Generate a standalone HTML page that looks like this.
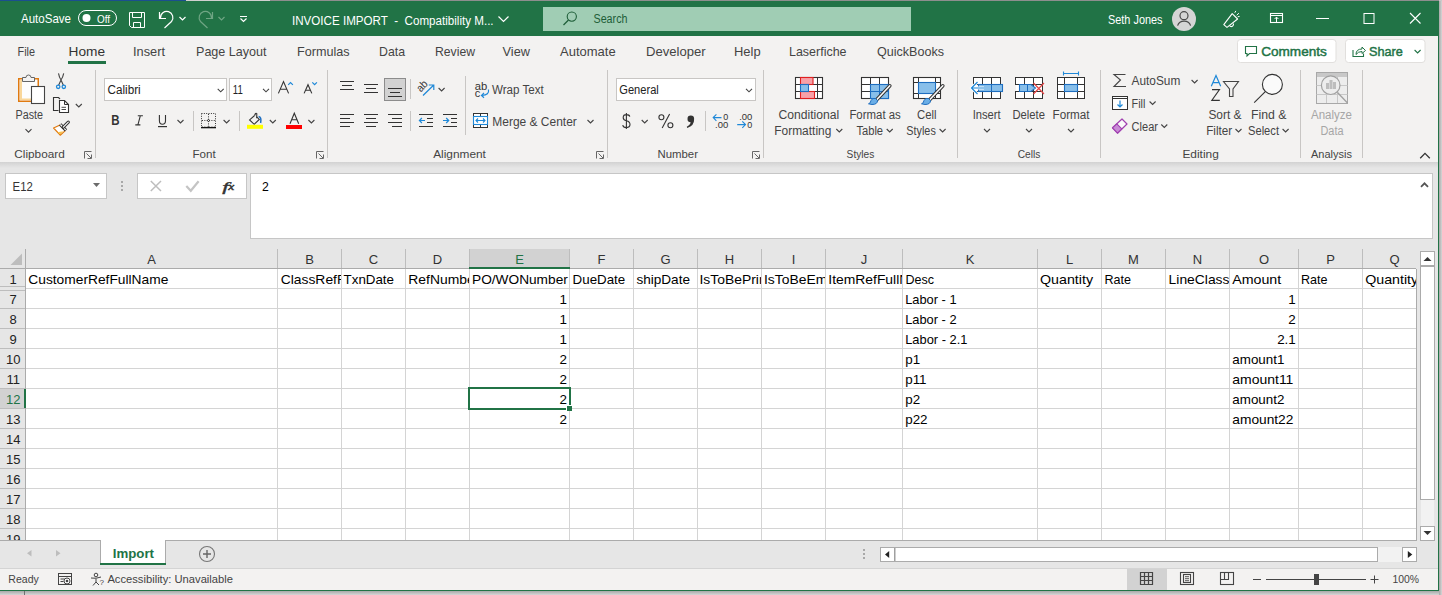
<!DOCTYPE html><html><head><meta charset="utf-8"><title>Excel</title><style>html,body{margin:0;padding:0;width:1442px;height:595px;overflow:hidden;background:#C9C9C9;font-family:"Liberation Sans",sans-serif}</style></head><body><svg width="1442" height="595" viewBox="0 0 1442 595" font-family="Liberation Sans, sans-serif" style="display:block"><rect x="0" y="0" width="1442" height="595" fill="#C9C9C9" />
<rect x="0" y="0" width="186" height="1" fill="#1B4F8F" />
<rect x="186" y="0" width="84" height="1" fill="#D0D0D0" />
<rect x="270" y="0" width="1169" height="1" fill="#8E8E8E" />
<rect x="0" y="1" width="1438" height="35" fill="#217346" />
<rect x="0" y="36" width="1438" height="126" fill="#F3F2F1" />
<rect x="0" y="162" width="1438" height="378" fill="#E6E6E6" />
<defs><linearGradient id="sh" x1="0" y1="0" x2="0" y2="1"><stop offset="0" stop-color="#D2D2D2"/><stop offset="1" stop-color="#E6E6E6"/></linearGradient></defs>
<rect x="0" y="162" width="1438" height="6" fill="url(#sh)" />
<text x="21" y="23" font-size="12.6" fill="#FFFFFF" textLength="50" lengthAdjust="spacingAndGlyphs" >AutoSave</text>
<rect x="78.5" y="10.5" width="38" height="15" rx="7.5" fill="none" stroke="#FFFFFF" stroke-width="1"/>
<circle cx="86.5" cy="18" r="4" fill="#FFFFFF"/>
<text x="97" y="22.5" font-size="11" fill="#FFFFFF" textLength="13" lengthAdjust="spacingAndGlyphs" >Off</text>
<path d="M129.5 12.5 H144.5 V27.5 H131.5 L129.5 25.5 Z" stroke="#FFFFFF" fill="none" stroke-width="1" />
<path d="M132.5 12.5 V17.5 H141.5 V12.5" stroke="#FFFFFF" fill="none" stroke-width="1" />
<path d="M133.5 27.5 V22.5 H140.5 V27.5" stroke="#FFFFFF" fill="none" stroke-width="1" />
<path d="M159.5 12 V18.5 H166" stroke="#FFFFFF" fill="none" stroke-width="1.2" />
<path d="M160.5 18 A6.2 6.2 0 1 1 171.5 21.5 L164.5 28" stroke="#FFFFFF" fill="none" stroke-width="1.2" />
<path d="M179.5 17 L182.5 20 L185.5 17" stroke="#FFFFFF" fill="none" stroke-width="1.2" />
<path d="M212.5 12 V18.5 H206" stroke="#6FA584" fill="none" stroke-width="1.2" />
<path d="M211.5 18 A6.2 6.2 0 1 0 200.5 21.5 L207.5 28" stroke="#6FA584" fill="none" stroke-width="1.2" />
<path d="M218.5 17 L221.5 20 L224.5 17" stroke="#6FA584" fill="none" stroke-width="1.2" />
<rect x="240" y="16" width="7" height="1" fill="#FFFFFF" />
<path d="M240.5 18.5 L243.5 21.5 L246.5 18.5" stroke="#FFFFFF" fill="none" stroke-width="1.2" />
<text x="292" y="24.8" font-size="12" fill="#FFFFFF" textLength="201.6" lengthAdjust="spacingAndGlyphs" >INVOICE IMPORT  -  Compatibility M...</text>
<path d="M498.5 16.5 L503.5 21.5 L508.5 16.5" stroke="#FFFFFF" fill="none" stroke-width="1.2" />
<rect x="543" y="7" width="368" height="24" fill="#A0CDB4" />
<circle cx="571.8" cy="16.6" r="4.6" fill="none" stroke="#1E5E38" stroke-width="1.1"/>
<path d="M568.5 20 L563.5 25" stroke="#1E5E38" fill="none" stroke-width="1.2" />
<text x="593.5" y="22.8" font-size="12" fill="#1E5E38" textLength="34" lengthAdjust="spacingAndGlyphs" >Search</text>
<text x="1108" y="24.2" font-size="12.3" fill="#FFFFFF" textLength="54.5" lengthAdjust="spacingAndGlyphs" >Seth Jones</text>
<circle cx="1184" cy="19" r="12" fill="#D5D5D5"/>
<circle cx="1184" cy="15.7" r="4" fill="none" stroke="#4A4A4A" stroke-width="1.2"/>
<path d="M1177.6 25.6 A6.8 6.2 0 0 1 1190.6 25.6" stroke="#4A4A4A" fill="none" stroke-width="1.2" />
<path d="M1223.8 24.6 L1232.2 13.6 L1237.6 19 L1227 27.4 Z" stroke="#FFFFFF" fill="none" stroke-width="1.1" stroke-linejoin="round"/>
<path d="M1229.6 25.4 A1.9 1.9 0 0 0 1233.2 23.4" stroke="#FFFFFF" fill="none" stroke-width="1.1" />
<path d="M1234.8 12.8 L1235.8 10.9 M1236.7 15.2 L1238.9 13.2 M1237.6 16.8 L1239.6 16.4" stroke="#FFFFFF" fill="none" stroke-width="1" />
<rect x="1270.5" y="13.5" width="12" height="9" fill="none" stroke="#FFF" stroke-width="1.1"/>
<rect x="1271" y="15" width="11" height="1" fill="#FFFFFF" />
<path d="M1276.5 22.5 V17.2 M1274.6 19 L1276.5 17.1 L1278.4 19" stroke="#FFFFFF" fill="none" stroke-width="1" />
<rect x="1316" y="18" width="13" height="1" fill="#FFFFFF" />
<rect x="1364" y="13.5" width="10" height="10" fill="none" stroke="#FFFFFF" stroke-width="1"/>
<path d="M1410 13 L1420.5 23.5 M1420.5 13 L1410 23.5" stroke="#FFFFFF" fill="none" stroke-width="1.1" />
<text x="17.5" y="55.6" font-size="12.6" fill="#444" textLength="17.5" lengthAdjust="spacingAndGlyphs" >File</text>
<text x="68.5" y="55.6" font-size="12.6" fill="#333" textLength="36.5" lengthAdjust="spacingAndGlyphs" >Home</text>
<text x="133" y="55.6" font-size="12.6" fill="#444" textLength="32" lengthAdjust="spacingAndGlyphs" >Insert</text>
<text x="196" y="55.6" font-size="12.6" fill="#444" textLength="70.6" lengthAdjust="spacingAndGlyphs" >Page Layout</text>
<text x="297" y="55.6" font-size="12.6" fill="#444" textLength="52.6" lengthAdjust="spacingAndGlyphs" >Formulas</text>
<text x="379" y="55.6" font-size="12.6" fill="#444" textLength="26" lengthAdjust="spacingAndGlyphs" >Data</text>
<text x="435" y="55.6" font-size="12.6" fill="#444" textLength="40" lengthAdjust="spacingAndGlyphs" >Review</text>
<text x="502.6" y="55.6" font-size="12.6" fill="#444" textLength="27.4" lengthAdjust="spacingAndGlyphs" >View</text>
<text x="560" y="55.6" font-size="12.6" fill="#444" textLength="55.7" lengthAdjust="spacingAndGlyphs" >Automate</text>
<text x="646" y="55.6" font-size="12.6" fill="#444" textLength="59.7" lengthAdjust="spacingAndGlyphs" >Developer</text>
<text x="734" y="55.6" font-size="12.6" fill="#444" textLength="26.6" lengthAdjust="spacingAndGlyphs" >Help</text>
<text x="789" y="55.6" font-size="12.6" fill="#444" textLength="57.5" lengthAdjust="spacingAndGlyphs" >Laserfiche</text>
<text x="877" y="55.6" font-size="12.6" fill="#444" textLength="67" lengthAdjust="spacingAndGlyphs" >QuickBooks</text>
<rect x="68" y="61" width="38" height="3" fill="#217346" />
<rect x="1237.5" y="39.5" width="98.5" height="23" rx="3" fill="#FFFFFF" stroke="#E1DFDD"/>
<rect x="1345.5" y="39.5" width="79.5" height="23" rx="3" fill="#FFFFFF" stroke="#E1DFDD"/>
<path d="M1245.5 46.5 H1256.5 V53.5 H1249.5 L1247 56 V53.5 H1245.5 Z" stroke="#217346" fill="none" stroke-width="1.1" />
<text x="1261.2" y="55.9" font-size="13" fill="#217346" textLength="65.6" lengthAdjust="spacingAndGlyphs" stroke="#217346" stroke-width="0.45">Comments</text>
<path d="M1353 50 V56.5 H1363.5 V53.5" stroke="#217346" fill="none" stroke-width="1.1" />
<path d="M1356 54.5 Q1356 49 1362 49 V47 L1365.5 50.5 L1362 53.5 V51.5 Q1358 51.5 1356 54.5 Z" stroke="#217346" fill="none" stroke-width="1" stroke-linejoin="round"/>
<text x="1369" y="55.9" font-size="13" fill="#217346" textLength="33.8" lengthAdjust="spacingAndGlyphs" stroke="#217346" stroke-width="0.45">Share</text>
<path d="M1414.6 50 L1417.6 53.0 L1420.6 50" stroke="#217346" fill="none" stroke-width="1.1" />
<rect x="18.75" y="78.75" width="19.5" height="22.5" fill="#FDFDFD" stroke="#E07A10" stroke-width="1.5"/>
<rect x="20" y="80" width="2" height="20" fill="#F9D79A" />
<rect x="20" y="98.5" width="11" height="1.5" fill="#F9D79A" />
<path d="M22.5 81.5 V77.5 H26 A2.5 2.5 0 0 1 31 77.5 H34.5 V81.5 Z" stroke="#666" fill="#F2F2F2" stroke-width="1" />
<rect x="31.5" y="86.5" width="13" height="17" fill="#FFFFFF" stroke="#444" stroke-width="1.1"/>
<text x="15.5" y="118.5" font-size="12" fill="#444444" textLength="27.5" lengthAdjust="spacingAndGlyphs" >Paste</text>
<path d="M25.5 129.2 L28.5 132.2 L31.5 129.2" stroke="#444" fill="none" stroke-width="1.1" />
<path d="M58.5 73.3 Q59.3 77.5 61 80 L58.6 85.2 M63.7 73.3 Q62.8 77.5 61 80 L63.4 85.2" stroke="#444" fill="none" stroke-width="1.1" />
<circle cx="58.2" cy="86.8" r="1.7" fill="none" stroke="#1E88D8" stroke-width="1.3"/>
<circle cx="63.8" cy="86.8" r="1.7" fill="none" stroke="#1E88D8" stroke-width="1.3"/>
<path d="M58.5 110.5 H53.5 V97.5 H58.5 L60 99" stroke="#333" fill="none" stroke-width="1.1" />
<path d="M59.5 100.5 H64.5 L68.5 104.5 V112.5 H59.5 Z" stroke="#333" fill="#FFF" stroke-width="1.1" />
<path d="M64.5 100.5 V104.5 H68.5" stroke="#333" fill="none" stroke-width="1" />
<path d="M61.5 107.3 H66 M61.5 109.5 H66" stroke="#333" fill="none" stroke-width="0.9" />
<path d="M75.8 104 L78.8 107.0 L81.8 104" stroke="#444" fill="none" stroke-width="1.1" />
<path d="M53.6 128 L60 125 L65.3 130.6 L60.2 135.2 Z" stroke="#E07A10" fill="#FFFFFF" stroke-width="1.2" stroke-linejoin="round"/>
<path d="M57.5 132.3 L63.2 131.3 L60.3 134.6 Z" stroke="none" fill="#F7C24A" stroke-width="1" />
<path d="M60.2 124.3 L66 130.3" stroke="#333" fill="none" stroke-width="3.2" />
<path d="M60.4 124.5 L65.8 130.1" stroke="#FFF" fill="none" stroke-width="1.1" />
<path d="M63.3 127.2 L68.3 122.2" stroke="#333" fill="none" stroke-width="3.2" stroke-linecap="round"/>
<path d="M63.3 127.2 L68.3 122.2" stroke="#FFF" fill="none" stroke-width="1.1" stroke-linecap="round"/>
<text x="14.3" y="157.6" font-size="11.2" fill="#444444" textLength="50.4" lengthAdjust="spacingAndGlyphs" >Clipboard</text>
<path d="M84.5 158.5 V151.5 H91.5" stroke="#666" fill="none" stroke-width="1" />
<path d="M86.5 153.5 L91 158 M91.5 154.5 V158.5 H87.5" stroke="#666" fill="none" stroke-width="1" />
<rect x="95" y="70" width="1" height="88" fill="#C8C6C4" />
<rect x="104.5" y="78.5" width="122" height="22" fill="#FFF" stroke="#C8C6C4"/>
<text x="107.6" y="93.8" font-size="12" fill="#222" textLength="33.1" lengthAdjust="spacingAndGlyphs" >Calibri</text>
<path d="M217.7 88.8 L220.7 91.8 L223.7 88.8" stroke="#444" fill="none" stroke-width="1.1" />
<rect x="229.5" y="78.5" width="42" height="22" fill="#FFF" stroke="#C8C6C4"/>
<text x="232.8" y="93.8" font-size="12" fill="#222" textLength="10" lengthAdjust="spacingAndGlyphs" >11</text>
<path d="M263 88.8 L266.0 91.8 L269 88.8" stroke="#444" fill="none" stroke-width="1.1" />
<path d="M278.4 93.4 L283.5 81.6 L288.6 93.4 M280.4 89.3 H286.6" stroke="#333" fill="none" stroke-width="1.1" />
<path d="M288.2 84.9 L290.5 82.6 L292.9 84.9" stroke="#1E88D8" fill="none" stroke-width="1.2" />
<path d="M304.1 93.4 L308 84.7 L311.8 93.4 M305.6 90.2 H310.4" stroke="#333" fill="none" stroke-width="1.1" />
<path d="M312.3 82.4 L314.6 84.7 L316.9 82.4" stroke="#1E88D8" fill="none" stroke-width="1.2" />
<text x="111.3" y="125" font-size="13.8" fill="#333" textLength="8.3" lengthAdjust="spacingAndGlyphs" font-weight="bold" >B</text>
<path d="M137.8 115.8 H142.9 M135.3 124.9 H140.4 M140.3 115.8 L137.9 124.9" stroke="#333" fill="none" stroke-width="1.1" />
<path d="M159.4 115 V120.8 Q159.4 124.3 162.45 124.3 Q165.5 124.3 165.5 120.8 V115" stroke="#333" fill="none" stroke-width="1.1" />
<rect x="158" y="126" width="9" height="1.2" fill="#333" />
<path d="M177.5 120 L180.5 123.0 L183.5 120" stroke="#444" fill="none" stroke-width="1.1" />
<rect x="193" y="111" width="1" height="20" fill="#C8C6C4" />
<rect x="201.5" y="113.5" width="14" height="13.5" fill="none" stroke="#333" stroke-width="1" stroke-dasharray="1 1.35"/>
<path d="M208.5 114 V127 M202 120.5 H215" stroke="#333" fill="none" stroke-width="1" stroke-dasharray="1 1.35"/>
<circle cx="208.5" cy="120.5" r="1" fill="none" stroke="#333" stroke-width="0.8"/>
<rect x="201" y="127" width="15" height="1.3" fill="#111" />
<path d="M223.6 120 L226.6 123.0 L229.6 120" stroke="#444" fill="none" stroke-width="1.1" />
<rect x="239" y="111" width="1" height="20" fill="#C8C6C4" />
<path d="M254.6 115.5 L249.6 119.9 L254.2 124.3 L259.3 119.4 L256.7 116.8" stroke="#333" fill="none" stroke-width="1.1" />
<path d="M254.6 115.5 Q255.6 112.4 256.8 113.6 L256.7 118.2" stroke="#333" fill="none" stroke-width="1.1" />
<path d="M258.6 116.6 Q261.8 117.3 260.6 123" stroke="#1E6EC0" fill="none" stroke-width="1.5" />
<rect x="247" y="124.8" width="16" height="4" fill="#FFFF00" />
<path d="M269.8 120 L272.8 123.0 L275.8 120" stroke="#444" fill="none" stroke-width="1.1" />
<path d="M290 123.8 L294.3 113.3 L298.7 123.8 M291.6 119.8 H297" stroke="#333" fill="none" stroke-width="1.1" />
<rect x="286" y="125" width="16" height="4" fill="#FF0000" />
<path d="M308.4 120 L311.4 123.0 L314.4 120" stroke="#444" fill="none" stroke-width="1.1" />
<text x="192.5" y="157.6" font-size="11.2" fill="#444444" textLength="23.2" lengthAdjust="spacingAndGlyphs" >Font</text>
<path d="M316.5 158.5 V151.5 H323.5" stroke="#666" fill="none" stroke-width="1" />
<path d="M318.5 153.5 L323 158 M323.5 154.5 V158.5 H319.5" stroke="#666" fill="none" stroke-width="1" />
<rect x="327" y="70" width="1" height="88" fill="#C8C6C4" />
<rect x="340" y="81" width="14" height="1" fill="#333" />
<rect x="342" y="85" width="10" height="1" fill="#333" />
<rect x="340" y="89" width="14" height="1" fill="#333" />
<rect x="364" y="84" width="14" height="1" fill="#333" />
<rect x="366" y="88" width="10" height="1" fill="#333" />
<rect x="364" y="92" width="14" height="1" fill="#333" />
<rect x="384.5" y="78.5" width="21" height="22" fill="#D2D2D2" stroke="#8C8C8C"/>
<rect x="388" y="88" width="14" height="1" fill="#333" />
<rect x="390" y="92" width="10" height="1" fill="#333" />
<rect x="388" y="96" width="14" height="1" fill="#333" />
<rect x="410" y="79" width="1" height="20" fill="#C8C6C4" />
<text x="415.5" y="90" font-size="11" fill="#333" textLength="11" lengthAdjust="spacingAndGlyphs" transform="rotate(-45 421 85)">ab</text>
<path d="M423 95.5 L433.8 85 M428.8 85 H433.8 V90" stroke="#1E88D8" fill="none" stroke-width="1.2" />
<path d="M438.6 88 L441.6 91.0 L444.6 88" stroke="#444" fill="none" stroke-width="1.1" />
<rect x="465" y="76" width="1" height="59" fill="#C8C6C4" />
<text x="474.8" y="90" font-size="10.5" fill="#333" textLength="12.5" lengthAdjust="spacingAndGlyphs" >ab</text>
<text x="474.8" y="96.8" font-size="10.5" fill="#333" textLength="5.5" lengthAdjust="spacingAndGlyphs" >c</text>
<path d="M488.5 89.5 Q489.5 95 482 95.5 M484 92.8 L481.5 95.5 L484 97.8" stroke="#1E88D8" fill="none" stroke-width="1.2" />
<text x="492" y="94" font-size="12.5" fill="#444444" textLength="51.8" lengthAdjust="spacingAndGlyphs" >Wrap Text</text>
<rect x="340" y="114" width="14" height="1" fill="#333" />
<rect x="340" y="118" width="10" height="1" fill="#333" />
<rect x="340" y="122" width="14" height="1" fill="#333" />
<rect x="340" y="126" width="10" height="1" fill="#333" />
<rect x="364" y="114" width="14" height="1" fill="#333" />
<rect x="366" y="118" width="10" height="1" fill="#333" />
<rect x="364" y="122" width="14" height="1" fill="#333" />
<rect x="366" y="126" width="10" height="1" fill="#333" />
<rect x="388" y="114" width="14" height="1" fill="#333" />
<rect x="392" y="118" width="10" height="1" fill="#333" />
<rect x="388" y="122" width="14" height="1" fill="#333" />
<rect x="392" y="126" width="10" height="1" fill="#333" />
<rect x="410" y="111" width="1" height="20" fill="#C8C6C4" />
<rect x="419" y="114" width="14" height="1" fill="#333" />
<rect x="419" y="126" width="14" height="1" fill="#333" />
<rect x="427" y="118" width="6" height="1" fill="#333" />
<rect x="427" y="122" width="6" height="1" fill="#333" />
<path d="M419.4 120.5 H425 M421.9 118 L419.4 120.5 L421.9 123" stroke="#1E88D8" fill="none" stroke-width="1.2" />
<rect x="443" y="114" width="14" height="1" fill="#333" />
<rect x="443" y="126" width="14" height="1" fill="#333" />
<rect x="451" y="118" width="6" height="1" fill="#333" />
<rect x="451" y="122" width="6" height="1" fill="#333" />
<path d="M443 120.5 H448.7 M446.2 118 L448.7 120.5 L446.2 123" stroke="#1E88D8" fill="none" stroke-width="1.2" />
<rect x="473.5" y="113.5" width="14" height="14" fill="#FFF" stroke="#333" stroke-width="1"/>
<path d="M480.5 114 V116.5 M480.5 124.5 V127" stroke="#333" fill="none" stroke-width="1" />
<rect x="473.5" y="116.5" width="14" height="8" fill="#FFF" stroke="#1E88D8" stroke-width="1.1"/>
<path d="M476 120.5 H485 M478 118.5 L476 120.5 L478 122.5 M483 118.5 L485 120.5 L483 122.5" stroke="#1E88D8" fill="none" stroke-width="1.1" />
<text x="492.3" y="126" font-size="12.5" fill="#444444" textLength="84.5" lengthAdjust="spacingAndGlyphs" >Merge &amp; Center</text>
<path d="M587.5 120 L590.5 123.0 L593.5 120" stroke="#444" fill="none" stroke-width="1.1" />
<text x="433.2" y="157.6" font-size="11.2" fill="#444444" textLength="52.7" lengthAdjust="spacingAndGlyphs" >Alignment</text>
<path d="M596.5 158.5 V151.5 H603.5" stroke="#666" fill="none" stroke-width="1" />
<path d="M598.5 153.5 L603 158 M603.5 154.5 V158.5 H599.5" stroke="#666" fill="none" stroke-width="1" />
<rect x="607" y="70" width="1" height="88" fill="#C8C6C4" />
<rect x="616.5" y="78.5" width="139" height="22" fill="#FFF" stroke="#C8C6C4"/>
<text x="619.3" y="93.8" font-size="12" fill="#222" textLength="39.5" lengthAdjust="spacingAndGlyphs" >General</text>
<path d="M746 88.8 L749.0 91.8 L752 88.8" stroke="#444" fill="none" stroke-width="1.1" />
<path d="M629.8 116.6 Q629.3 114.6 626.4 114.6 Q623.2 114.6 623.2 117.4 Q623.2 120 626.4 120.8 Q630 121.6 630 124.6 Q630 127.6 626.4 127.6 Q623.2 127.6 622.7 125.2 M626.4 113 V129" stroke="#333" fill="none" stroke-width="1.1" />
<path d="M641.7 120 L644.7 123.0 L647.7 120" stroke="#444" fill="none" stroke-width="1.1" />
<circle cx="661.4" cy="117.2" r="2.5" fill="none" stroke="#333" stroke-width="1.1"/><circle cx="670.4" cy="125.2" r="2.5" fill="none" stroke="#333" stroke-width="1.1"/>
<path d="M669.6 114 L662.2 128" stroke="#333" fill="none" stroke-width="1.1" />
<circle cx="690.8" cy="118.9" r="3.3" fill="#333"/>
<path d="M694 119.5 Q694.5 125.5 687.2 128 L686.8 126.8 Q691 124.5 690.6 121.5 Z" stroke="none" fill="#333" stroke-width="1" />
<rect x="705" y="111" width="1" height="20" fill="#C8C6C4" />
<path d="M713.2 117.6 H721.5 M716.4 114.4 L713.2 117.6 L716.4 120.8" stroke="#1E88D8" fill="none" stroke-width="1.1" />
<text x="723.2" y="119.6" font-size="9" fill="#333" textLength="5" lengthAdjust="spacingAndGlyphs" >0</text>
<text x="715" y="128" font-size="9" fill="#333" textLength="13.2" lengthAdjust="spacingAndGlyphs" >.00</text>
<text x="739.2" y="119.6" font-size="9" fill="#333" textLength="13.2" lengthAdjust="spacingAndGlyphs" >.00</text>
<path d="M737.2 124.6 H745.5 M742.3 121.4 L745.5 124.6 L742.3 127.8" stroke="#1E88D8" fill="none" stroke-width="1.1" />
<text x="747.3" y="128" font-size="9" fill="#333" textLength="5" lengthAdjust="spacingAndGlyphs" >0</text>
<text x="657.5" y="157.6" font-size="11.2" fill="#444444" textLength="40.5" lengthAdjust="spacingAndGlyphs" >Number</text>
<path d="M752.5 158.5 V151.5 H759.5" stroke="#666" fill="none" stroke-width="1" />
<path d="M754.5 153.5 L759 158 M759.5 154.5 V158.5 H755.5" stroke="#666" fill="none" stroke-width="1" />
<rect x="763" y="70" width="1" height="88" fill="#C8C6C4" />
<rect x="795.5" y="77.5" width="27" height="21" fill="#FFF" stroke="#333" stroke-width="1.1"/>
<path d="M800.5 77.5 V98.5 M817.5 77.5 V98.5 M795.5 84.5 H822.5 M795.5 91.5 H822.5" stroke="#333" fill="none" stroke-width="1" />
<rect x="800.5" y="77.5" width="12.5" height="7" fill="#F7A1A8" stroke="#E02020" stroke-width="1.1"/>
<rect x="800.5" y="91.5" width="14" height="7" fill="#F7A1A8" stroke="#E02020" stroke-width="1.1"/>
<rect x="800.5" y="84.5" width="8" height="7" fill="#88BFEA" stroke="#1E6EC0" stroke-width="1.1"/>
<text x="778.5" y="119" font-size="12.5" fill="#444444" textLength="60.8" lengthAdjust="spacingAndGlyphs" >Conditional</text>
<text x="774.3" y="135" font-size="12.5" fill="#444444" textLength="57" lengthAdjust="spacingAndGlyphs" >Formatting</text>
<path d="M836.3 129 L839.3 132.0 L842.3 129" stroke="#444" fill="none" stroke-width="1.1" />
<rect x="861.5" y="77.5" width="27" height="21" fill="#FFF" stroke="#333" stroke-width="1.1"/>
<path d="M870.5 77.5 V98.5 M879.5 77.5 V98.5 M861.5 84.5 H888.5 M861.5 91.5 H888.5" stroke="#333" fill="none" stroke-width="1" />
<rect x="870.5" y="84.5" width="18" height="14" fill="#88BFEA" stroke="#1E6EC0" stroke-width="1.1"/>
<path d="M879.5 84.5 V98.5 M870.5 91.5 H888.5" stroke="#1E6EC0" fill="none" stroke-width="1" />
<path d="M876 100.5 L889.8 85.8" stroke="#333" fill="none" stroke-width="3.6" stroke-linecap="round"/>
<path d="M876 100.5 L889.8 85.8" stroke="#FAFAFA" fill="none" stroke-width="1.6" stroke-linecap="round"/>
<path d="M868.5 103.8 Q870.5 103.5 871 100.5 Q872.5 97.5 875.5 98.5 L877.5 100.5 Q877.5 104.5 872 104.5 Z" stroke="#1E6EC0" fill="#6AAEE6" stroke-width="1" />
<text x="849.4" y="119" font-size="12.5" fill="#444444" textLength="51.4" lengthAdjust="spacingAndGlyphs" >Format as</text>
<text x="856.4" y="135" font-size="12.5" fill="#444444" textLength="26.7" lengthAdjust="spacingAndGlyphs" >Table</text>
<path d="M886.7 129 L889.7 132.0 L892.7 129" stroke="#444" fill="none" stroke-width="1.1" />
<rect x="913.5" y="77.5" width="27" height="21" fill="#FFF" stroke="#333" stroke-width="1.1"/>
<path d="M918.5 77.5 V98.5 M935.5 77.5 V98.5 M913.5 82.5 H940.5 M913.5 93.5 H940.5" stroke="#333" fill="none" stroke-width="1" />
<rect x="918.5" y="82.5" width="17" height="11" fill="#88BFEA" stroke="#1E6EC0" stroke-width="1.1"/>
<path d="M929 100.5 L942.8 85.8" stroke="#333" fill="none" stroke-width="3.6" stroke-linecap="round"/>
<path d="M929 100.5 L942.8 85.8" stroke="#FAFAFA" fill="none" stroke-width="1.6" stroke-linecap="round"/>
<path d="M921.5 103.8 Q923.5 103.5 924 100.5 Q925.5 97.5 928.5 98.5 L930.5 100.5 Q930.5 104.5 925 104.5 Z" stroke="#1E6EC0" fill="#6AAEE6" stroke-width="1" />
<text x="917" y="119" font-size="12.5" fill="#444444" textLength="19.5" lengthAdjust="spacingAndGlyphs" >Cell</text>
<text x="906.3" y="135" font-size="12.5" fill="#444444" textLength="29.5" lengthAdjust="spacingAndGlyphs" >Styles</text>
<path d="M939.6 129 L942.6 132.0 L945.6 129" stroke="#444" fill="none" stroke-width="1.1" />
<text x="846.6" y="157.6" font-size="11.2" fill="#444444" textLength="27.7" lengthAdjust="spacingAndGlyphs" >Styles</text>
<rect x="957" y="70" width="1" height="88" fill="#C8C6C4" />
<rect x="973.5" y="77.5" width="27" height="21" fill="#FFF" stroke="#333"/>
<path d="M982.5 77.5 V98.5 M991.5 77.5 V98.5 M973.5 84.5 H1000.5 M973.5 91.5 H1000.5" stroke="#333" fill="none" stroke-width="1" />
<rect x="978.5" y="84.5" width="24" height="7" fill="#88BFEA" stroke="#1E6EC0" stroke-width="1.1"/>
<path d="M991.5 84.5 V91.5" stroke="#1E6EC0" fill="none" stroke-width="1" />
<path d="M971.5 88 H984 M977.5 82 L971.5 88 L977.5 94" stroke="#FFF" fill="none" stroke-width="3" />
<path d="M971.5 88 H984 M977.5 82 L971.5 88 L977.5 94" stroke="#1E88D8" fill="none" stroke-width="1.2" />
<rect x="1015.5" y="77.5" width="27" height="21" fill="#FFF" stroke="#333"/>
<path d="M1024.5 77.5 V98.5 M1033.5 77.5 V98.5 M1015.5 84.5 H1042.5 M1015.5 91.5 H1042.5" stroke="#333" fill="none" stroke-width="1" />
<rect x="1014" y="85" width="2" height="6" fill="#F3F2F1" />
<path d="M1019.5 84.5 H1031 L1035.5 88 L1031 91.5 H1019.5 Z" stroke="#1E6EC0" fill="#88BFEA" stroke-width="1.1" />
<path d="M1027.5 84.5 V91.5" stroke="#1E6EC0" fill="none" stroke-width="1" />
<path d="M1033.5 83 L1044 94 M1044 83 L1033.5 94" stroke="#E84545" fill="none" stroke-width="1.2" />
<rect x="1057.5" y="77.5" width="27" height="21" fill="#FFF" stroke="#333"/>
<path d="M1064.5 77.5 V98.5 M1077.5 77.5 V98.5 M1057.5 84.5 H1084.5 M1057.5 91.5 H1084.5" stroke="#333" fill="none" stroke-width="1" />
<rect x="1064.5" y="84.5" width="13" height="7" fill="#88BFEA" stroke="#1E6EC0" stroke-width="1.1"/>
<path d="M1063.5 73.5 H1078.5 M1063.5 71.5 V75.5 M1078.5 71.5 V75.5" stroke="#1E88D8" fill="none" stroke-width="1.1" />
<text x="972.7" y="119" font-size="12.5" fill="#444444" textLength="28" lengthAdjust="spacingAndGlyphs" >Insert</text>
<text x="1012.5" y="119" font-size="12.5" fill="#444444" textLength="32.5" lengthAdjust="spacingAndGlyphs" >Delete</text>
<text x="1052.5" y="119" font-size="12.5" fill="#444444" textLength="37" lengthAdjust="spacingAndGlyphs" >Format</text>
<path d="M984 129 L987.0 132.0 L990 129" stroke="#444" fill="none" stroke-width="1.1" />
<path d="M1026 129 L1029.0 132.0 L1032 129" stroke="#444" fill="none" stroke-width="1.1" />
<path d="M1068 129 L1071.0 132.0 L1074 129" stroke="#444" fill="none" stroke-width="1.1" />
<text x="1017.7" y="157.6" font-size="11.2" fill="#444444" textLength="22.7" lengthAdjust="spacingAndGlyphs" >Cells</text>
<rect x="1100" y="70" width="1" height="88" fill="#C8C6C4" />
<path d="M1125.5 74.5 H1114 L1120.5 80 L1114 86.5 H1126" stroke="#444" fill="none" stroke-width="1.1" />
<text x="1131.6" y="84.5" font-size="12.5" fill="#444444" textLength="48.7" lengthAdjust="spacingAndGlyphs" >AutoSum</text>
<path d="M1191.6 80 L1194.6 83.0 L1197.6 80" stroke="#444" fill="none" stroke-width="1.1" />
<rect x="1112.5" y="96.5" width="15" height="13" fill="#FFF" stroke="#333"/>
<rect x="1113" y="98" width="14" height="1" fill="#333" />
<path d="M1120 100.5 V107 M1117.5 104.5 L1120 107 L1122.5 104.5" stroke="#1E88D8" fill="none" stroke-width="1.2" />
<text x="1131.6" y="108" font-size="12.5" fill="#444444" textLength="13.8" lengthAdjust="spacingAndGlyphs" >Fill</text>
<path d="M1149.6 101.5 L1152.6 104.5 L1155.6 101.5" stroke="#444" fill="none" stroke-width="1.1" />
<path d="M1112.5 127.8 L1122 119 L1127 124 L1117.5 133.2 Z" stroke="#A040B0" fill="#FAFAFA" stroke-width="1.2" stroke-linejoin="round"/>
<path d="M1112.5 127.8 L1116.8 123.8 L1121.8 128.8 L1117.5 133.2 Z" stroke="#A040B0" fill="#C88AD6" stroke-width="1.1" stroke-linejoin="round"/>
<text x="1131.6" y="131" font-size="12.5" fill="#444444" textLength="26.4" lengthAdjust="spacingAndGlyphs" >Clear</text>
<path d="M1161.3 124.5 L1164.3 127.5 L1167.3 124.5" stroke="#444" fill="none" stroke-width="1.1" />
<path d="M1211.3 86.2 L1216 75.4 L1220.7 86.2 M1212.9 82.6 H1219.1" stroke="#1E88D8" fill="none" stroke-width="1.2" />
<path d="M1212 89.6 H1219.5 L1211.8 100.4 H1219.8" stroke="#333" fill="none" stroke-width="1.1" />
<path d="M1223.5 81.5 H1238.5 L1233 89 V96.5 H1229.5 V89 Z" stroke="#444" fill="none" stroke-width="1.1" />
<text x="1208.4" y="119" font-size="12.5" fill="#444444" textLength="33.1" lengthAdjust="spacingAndGlyphs" >Sort &amp;</text>
<text x="1206.2" y="135" font-size="12.5" fill="#444444" textLength="26" lengthAdjust="spacingAndGlyphs" >Filter</text>
<path d="M1235.5 129 L1238.5 132.0 L1241.5 129" stroke="#444" fill="none" stroke-width="1.1" />
<circle cx="1272.4" cy="84.4" r="10" fill="#FAFAFA" stroke="#333" stroke-width="1.1"/>
<path d="M1265.3 91.6 L1254.2 102.6" stroke="#333" fill="none" stroke-width="1.1" />
<text x="1251" y="119" font-size="12.5" fill="#444444" textLength="35.5" lengthAdjust="spacingAndGlyphs" >Find &amp;</text>
<text x="1248" y="135" font-size="12.5" fill="#444444" textLength="31" lengthAdjust="spacingAndGlyphs" >Select</text>
<path d="M1282.6 129 L1285.6 132.0 L1288.6 129" stroke="#444" fill="none" stroke-width="1.1" />
<text x="1182.4" y="157.6" font-size="11.2" fill="#444444" textLength="36.4" lengthAdjust="spacingAndGlyphs" >Editing</text>
<rect x="1300" y="70" width="1" height="88" fill="#C8C6C4" />
<rect x="1316.5" y="72.5" width="31" height="31" fill="#EDEDED" stroke="#A8A8A8"/>
<rect x="1317" y="73" width="30" height="4" fill="#C8C8C8" />
<path d="M1316.5 85.5 H1347.5 M1316.5 94.5 H1347.5 M1326.5 77 V103 M1337.5 77 V103" stroke="#C8C8C8" fill="none" stroke-width="1" />
<circle cx="1330.7" cy="85.2" r="9.3" fill="#EDEDED" stroke="#A0A0A0" stroke-width="1.2"/>
<rect x="1326" y="83" width="3" height="6" fill="#BDBDBD" />
<rect x="1329.5" y="80" width="3" height="9" fill="#BDBDBD" />
<rect x="1333" y="82" width="3" height="7" fill="#BDBDBD" />
<path d="M1337.5 92.5 L1347.5 103" stroke="#A0A0A0" fill="none" stroke-width="1.3" />
<text x="1311" y="119" font-size="12.5" fill="#A6A6A6" textLength="41" lengthAdjust="spacingAndGlyphs" >Analyze</text>
<text x="1320.5" y="135" font-size="12.5" fill="#A6A6A6" textLength="23" lengthAdjust="spacingAndGlyphs" >Data</text>
<text x="1311" y="157.6" font-size="11.2" fill="#444444" textLength="41" lengthAdjust="spacingAndGlyphs" >Analysis</text>
<rect x="1362" y="70" width="1" height="88" fill="#C8C6C4" />
<path d="M1420.2 158.2 L1425 153.4 L1429.8 158.2" stroke="#333" fill="none" stroke-width="1.3" />
<rect x="5.5" y="173.5" width="101" height="25" fill="#FFF" stroke="#C6C6C6"/>
<text x="12.6" y="190.8" font-size="12.5" fill="#333" textLength="20.2" lengthAdjust="spacingAndGlyphs" >E12</text>
<path d="M93 183 H100 L96.5 187 Z" stroke="none" fill="#6B6B6B" stroke-width="1" />
<rect x="121" y="181" width="2" height="2" fill="#A8A8A8" />
<rect x="121" y="185" width="2" height="2" fill="#A8A8A8" />
<rect x="121" y="189" width="2" height="2" fill="#A8A8A8" />
<rect x="137.5" y="173.5" width="109" height="25" fill="#FFF" stroke="#C6C6C6"/>
<path d="M150.8 181 L161 191 M161 181 L150.8 191" stroke="#BDBDBD" fill="none" stroke-width="1.5" />
<path d="M186.3 186 L190.8 190.8 L198.6 181.3" stroke="#C4C4C4" fill="none" stroke-width="2.2" />
<text x="222.3" y="190.5" font-size="13.5" fill="#333" textLength="6.5" lengthAdjust="spacingAndGlyphs" font-style="italic" font-family="Liberation Serif" stroke="#333" stroke-width="0.4">f</text>
<text x="228.2" y="190" font-size="9.5" fill="#333" textLength="6" lengthAdjust="spacingAndGlyphs" font-style="italic" font-family="Liberation Serif" stroke="#333" stroke-width="0.4">x</text>
<rect x="250.5" y="173.5" width="1182" height="65" fill="#FFF" stroke="#C6C6C6"/>
<text x="262" y="191" font-size="13" fill="#000" textLength="6.8" lengthAdjust="spacingAndGlyphs" >2</text>
<path d="M1421 186.8 L1424.5 183.3 L1428 186.8" stroke="#555" fill="none" stroke-width="1.8" />
<rect x="0" y="249" width="1417" height="291" fill="#E6E6E6" />
<rect x="26" y="269" width="1390" height="271" fill="#FFFFFF" />
<rect x="469" y="249" width="101" height="18" fill="#D2D2D2" />
<rect x="0" y="389" width="25" height="19" fill="#D2D2D2" />
<path d="M10.5 265 H22 V253.5 Z" stroke="none" fill="#BDBDBD" stroke-width="1" />
<text x="151.5" y="264.1" font-size="13" fill="#333" text-anchor="middle" >A</text>
<text x="309.5" y="264.1" font-size="13" fill="#333" text-anchor="middle" >B</text>
<text x="373.5" y="264.1" font-size="13" fill="#333" text-anchor="middle" >C</text>
<text x="437.5" y="264.1" font-size="13" fill="#333" text-anchor="middle" >D</text>
<text x="519.5" y="264.1" font-size="13" fill="#217346" text-anchor="middle" >E</text>
<text x="601.5" y="264.1" font-size="13" fill="#333" text-anchor="middle" >F</text>
<text x="665.5" y="264.1" font-size="13" fill="#333" text-anchor="middle" >G</text>
<text x="729.5" y="264.1" font-size="13" fill="#333" text-anchor="middle" >H</text>
<text x="793.5" y="264.1" font-size="13" fill="#333" text-anchor="middle" >I</text>
<text x="864.0" y="264.1" font-size="13" fill="#333" text-anchor="middle" >J</text>
<text x="970.0" y="264.1" font-size="13" fill="#333" text-anchor="middle" >K</text>
<text x="1069.5" y="264.1" font-size="13" fill="#333" text-anchor="middle" >L</text>
<text x="1133.5" y="264.1" font-size="13" fill="#333" text-anchor="middle" >M</text>
<text x="1197.5" y="264.1" font-size="13" fill="#333" text-anchor="middle" >N</text>
<text x="1264.0" y="264.1" font-size="13" fill="#333" text-anchor="middle" >O</text>
<text x="1330.5" y="264.1" font-size="13" fill="#333" text-anchor="middle" >P</text>
<text x="1394.5" y="264.1" font-size="13" fill="#333" text-anchor="middle" >Q</text>
<rect x="26" y="288" width="1390" height="1" fill="#D4D4D4" />
<rect x="0" y="286" width="25" height="1" fill="#BDBDBD" />
<rect x="26" y="308" width="1390" height="1" fill="#D4D4D4" />
<rect x="0" y="308" width="25" height="1" fill="#BDBDBD" />
<rect x="26" y="328" width="1390" height="1" fill="#D4D4D4" />
<rect x="0" y="328" width="25" height="1" fill="#BDBDBD" />
<rect x="26" y="348" width="1390" height="1" fill="#D4D4D4" />
<rect x="0" y="348" width="25" height="1" fill="#BDBDBD" />
<rect x="26" y="368" width="1390" height="1" fill="#D4D4D4" />
<rect x="0" y="368" width="25" height="1" fill="#BDBDBD" />
<rect x="26" y="388" width="1390" height="1" fill="#D4D4D4" />
<rect x="0" y="388" width="25" height="1" fill="#BDBDBD" />
<rect x="26" y="408" width="1390" height="1" fill="#D4D4D4" />
<rect x="0" y="408" width="25" height="1" fill="#BDBDBD" />
<rect x="26" y="428" width="1390" height="1" fill="#D4D4D4" />
<rect x="0" y="428" width="25" height="1" fill="#BDBDBD" />
<rect x="26" y="448" width="1390" height="1" fill="#D4D4D4" />
<rect x="0" y="448" width="25" height="1" fill="#BDBDBD" />
<rect x="26" y="468" width="1390" height="1" fill="#D4D4D4" />
<rect x="0" y="468" width="25" height="1" fill="#BDBDBD" />
<rect x="26" y="488" width="1390" height="1" fill="#D4D4D4" />
<rect x="0" y="488" width="25" height="1" fill="#BDBDBD" />
<rect x="26" y="508" width="1390" height="1" fill="#D4D4D4" />
<rect x="0" y="508" width="25" height="1" fill="#BDBDBD" />
<rect x="26" y="528" width="1390" height="1" fill="#D4D4D4" />
<rect x="0" y="528" width="25" height="1" fill="#BDBDBD" />
<rect x="277" y="269" width="1" height="271" fill="#D4D4D4" />
<rect x="277" y="249" width="1" height="19" fill="#BDBDBD" />
<rect x="341" y="269" width="1" height="271" fill="#D4D4D4" />
<rect x="341" y="249" width="1" height="19" fill="#BDBDBD" />
<rect x="405" y="269" width="1" height="271" fill="#D4D4D4" />
<rect x="405" y="249" width="1" height="19" fill="#BDBDBD" />
<rect x="469" y="269" width="1" height="271" fill="#D4D4D4" />
<rect x="469" y="249" width="1" height="19" fill="#BDBDBD" />
<rect x="569" y="269" width="1" height="271" fill="#D4D4D4" />
<rect x="569" y="249" width="1" height="19" fill="#BDBDBD" />
<rect x="633" y="269" width="1" height="271" fill="#D4D4D4" />
<rect x="633" y="249" width="1" height="19" fill="#BDBDBD" />
<rect x="697" y="269" width="1" height="271" fill="#D4D4D4" />
<rect x="697" y="249" width="1" height="19" fill="#BDBDBD" />
<rect x="761" y="269" width="1" height="271" fill="#D4D4D4" />
<rect x="761" y="249" width="1" height="19" fill="#BDBDBD" />
<rect x="825" y="269" width="1" height="271" fill="#D4D4D4" />
<rect x="825" y="249" width="1" height="19" fill="#BDBDBD" />
<rect x="902" y="269" width="1" height="271" fill="#D4D4D4" />
<rect x="902" y="249" width="1" height="19" fill="#BDBDBD" />
<rect x="1037" y="269" width="1" height="271" fill="#D4D4D4" />
<rect x="1037" y="249" width="1" height="19" fill="#BDBDBD" />
<rect x="1101" y="269" width="1" height="271" fill="#D4D4D4" />
<rect x="1101" y="249" width="1" height="19" fill="#BDBDBD" />
<rect x="1165" y="269" width="1" height="271" fill="#D4D4D4" />
<rect x="1165" y="249" width="1" height="19" fill="#BDBDBD" />
<rect x="1229" y="269" width="1" height="271" fill="#D4D4D4" />
<rect x="1229" y="249" width="1" height="19" fill="#BDBDBD" />
<rect x="1298" y="269" width="1" height="271" fill="#D4D4D4" />
<rect x="1298" y="249" width="1" height="19" fill="#BDBDBD" />
<rect x="1362" y="269" width="1" height="271" fill="#D4D4D4" />
<rect x="1362" y="249" width="1" height="19" fill="#BDBDBD" />
<rect x="1416" y="269" width="1" height="271" fill="#ABABAB" />
<rect x="0" y="268" width="1416" height="1" fill="#ABABAB" />
<rect x="25" y="249" width="1" height="291" fill="#ABABAB" />
<rect x="0" y="290" width="25" height="1" fill="#BDBDBD" />
<text x="13.2" y="284" font-size="13" fill="#222" text-anchor="middle" >1</text>
<text x="13.2" y="304" font-size="13" fill="#222" text-anchor="middle" >7</text>
<text x="13.2" y="324" font-size="13" fill="#222" text-anchor="middle" >8</text>
<text x="13.2" y="344" font-size="13" fill="#222" text-anchor="middle" >9</text>
<text x="13.2" y="364" font-size="13" fill="#222" text-anchor="middle" >10</text>
<text x="13.2" y="384" font-size="13" fill="#222" text-anchor="middle" >11</text>
<text x="13.2" y="404" font-size="13" fill="#217346" text-anchor="middle" >12</text>
<text x="13.2" y="424" font-size="13" fill="#222" text-anchor="middle" >13</text>
<text x="13.2" y="444" font-size="13" fill="#222" text-anchor="middle" >14</text>
<text x="13.2" y="464" font-size="13" fill="#222" text-anchor="middle" >15</text>
<text x="13.2" y="484" font-size="13" fill="#222" text-anchor="middle" >16</text>
<text x="13.2" y="504" font-size="13" fill="#222" text-anchor="middle" >17</text>
<text x="13.2" y="524" font-size="13" fill="#222" text-anchor="middle" >18</text>
<text x="13.2" y="544" font-size="13" fill="#222" text-anchor="middle" >19</text>
<rect x="24" y="389" width="2" height="19" fill="#217346" />
<rect x="469" y="267" width="101" height="2" fill="#217346" />
<defs><clipPath id="c0"><rect x="26" y="269" width="251" height="271"/></clipPath><clipPath id="c1"><rect x="278" y="269" width="63" height="271"/></clipPath><clipPath id="c2"><rect x="342" y="269" width="63" height="271"/></clipPath><clipPath id="c3"><rect x="406" y="269" width="63" height="271"/></clipPath><clipPath id="c4"><rect x="470" y="269" width="99" height="271"/></clipPath><clipPath id="c5"><rect x="570" y="269" width="63" height="271"/></clipPath><clipPath id="c6"><rect x="634" y="269" width="63" height="271"/></clipPath><clipPath id="c7"><rect x="698" y="269" width="63" height="271"/></clipPath><clipPath id="c8"><rect x="762" y="269" width="63" height="271"/></clipPath><clipPath id="c9"><rect x="826" y="269" width="76" height="271"/></clipPath><clipPath id="c10"><rect x="903" y="269" width="134" height="271"/></clipPath><clipPath id="c11"><rect x="1038" y="269" width="63" height="271"/></clipPath><clipPath id="c12"><rect x="1102" y="269" width="63" height="271"/></clipPath><clipPath id="c13"><rect x="1166" y="269" width="63" height="271"/></clipPath><clipPath id="c14"><rect x="1230" y="269" width="68" height="271"/></clipPath><clipPath id="c15"><rect x="1299" y="269" width="63" height="271"/></clipPath><clipPath id="c16"><rect x="1363" y="269" width="53" height="271"/></clipPath></defs>
<g clip-path="url(#c0)">
<text x="28.3" y="283.6" font-size="13.4" fill="#000" textLength="140" lengthAdjust="spacingAndGlyphs" >CustomerRefFullName</text>
</g>
<g clip-path="url(#c1)">
<text x="280.7" y="283.6" font-size="13.4" fill="#000" textLength="115.6" lengthAdjust="spacingAndGlyphs" >ClassRefFullName</text>
</g>
<g clip-path="url(#c2)">
<text x="343.6" y="283.6" font-size="13.4" fill="#000" textLength="50.4" lengthAdjust="spacingAndGlyphs" >TxnDate</text>
</g>
<g clip-path="url(#c3)">
<text x="408.3" y="283.6" font-size="13.4" fill="#000" textLength="71" lengthAdjust="spacingAndGlyphs" >RefNumber</text>
</g>
<g clip-path="url(#c4)">
<text x="472" y="283.6" font-size="13.4" fill="#000" textLength="95.8" lengthAdjust="spacingAndGlyphs" >PO/WONumber</text>
</g>
<g clip-path="url(#c5)">
<text x="572.6" y="283.6" font-size="13.4" fill="#000" textLength="52.6" lengthAdjust="spacingAndGlyphs" >DueDate</text>
</g>
<g clip-path="url(#c6)">
<text x="636.4" y="283.6" font-size="13.4" fill="#000" textLength="53.6" lengthAdjust="spacingAndGlyphs" >shipDate</text>
</g>
<g clip-path="url(#c7)">
<text x="699.5" y="283.6" font-size="13.4" fill="#000" textLength="86.4" lengthAdjust="spacingAndGlyphs" >IsToBePrinted</text>
</g>
<g clip-path="url(#c8)">
<text x="764" y="283.6" font-size="13.4" fill="#000" textLength="92.5" lengthAdjust="spacingAndGlyphs" >IsToBeEmailed</text>
</g>
<g clip-path="url(#c9)">
<text x="828.3" y="283.6" font-size="13.4" fill="#000" textLength="108" lengthAdjust="spacingAndGlyphs" >ItemRefFullName</text>
</g>
<g clip-path="url(#c10)">
<text x="905.5" y="283.6" font-size="13.4" fill="#000" textLength="28.5" lengthAdjust="spacingAndGlyphs" >Desc</text>
</g>
<g clip-path="url(#c11)">
<text x="1040" y="283.6" font-size="13.4" fill="#000" textLength="53" lengthAdjust="spacingAndGlyphs" >Quantity</text>
</g>
<g clip-path="url(#c12)">
<text x="1104.5" y="283.6" font-size="13.4" fill="#000" textLength="26.5" lengthAdjust="spacingAndGlyphs" >Rate</text>
</g>
<g clip-path="url(#c13)">
<text x="1168.6" y="283.6" font-size="13.4" fill="#000" textLength="141.8" lengthAdjust="spacingAndGlyphs" >LineClassRefFullName</text>
</g>
<g clip-path="url(#c14)">
<text x="1232.2" y="283.6" font-size="13.4" fill="#000" textLength="49" lengthAdjust="spacingAndGlyphs" >Amount</text>
</g>
<g clip-path="url(#c15)">
<text x="1301" y="283.6" font-size="13.4" fill="#000" textLength="26.5" lengthAdjust="spacingAndGlyphs" >Rate</text>
</g>
<g clip-path="url(#c16)">
<text x="1365.2" y="283.6" font-size="13.4" fill="#000" textLength="53" lengthAdjust="spacingAndGlyphs" >Quantity</text>
</g>
<text x="567" y="303.6" font-size="13.4" fill="#000" text-anchor="end" >1</text>
<text x="567" y="323.6" font-size="13.4" fill="#000" text-anchor="end" >1</text>
<text x="567" y="343.6" font-size="13.4" fill="#000" text-anchor="end" >1</text>
<text x="567" y="363.6" font-size="13.4" fill="#000" text-anchor="end" >2</text>
<text x="567" y="383.6" font-size="13.4" fill="#000" text-anchor="end" >2</text>
<text x="567" y="403.6" font-size="13.4" fill="#000" text-anchor="end" >2</text>
<text x="567" y="423.6" font-size="13.4" fill="#000" text-anchor="end" >2</text>
<text x="905.2" y="303.6" font-size="13.4" fill="#000" textLength="51.4" lengthAdjust="spacingAndGlyphs" >Labor - 1</text>
<text x="905.2" y="323.6" font-size="13.4" fill="#000" textLength="51.4" lengthAdjust="spacingAndGlyphs" >Labor - 2</text>
<text x="905.2" y="343.6" font-size="13.4" fill="#000" textLength="62.2" lengthAdjust="spacingAndGlyphs" >Labor - 2.1</text>
<text x="905.2" y="363.6" font-size="13.4" fill="#000" >p1</text>
<text x="905.2" y="383.6" font-size="13.4" fill="#000" >p11</text>
<text x="905.2" y="403.6" font-size="13.4" fill="#000" >p2</text>
<text x="905.2" y="423.6" font-size="13.4" fill="#000" >p22</text>
<text x="1295.8" y="303.6" font-size="13.4" fill="#000" text-anchor="end" >1</text>
<text x="1295.8" y="323.6" font-size="13.4" fill="#000" text-anchor="end" >2</text>
<text x="1295.8" y="343.6" font-size="13.4" fill="#000" text-anchor="end" >2.1</text>
<text x="1232.3" y="363.6" font-size="13.4" fill="#000" >amount1</text>
<text x="1232.3" y="383.6" font-size="13.4" fill="#000" textLength="61.1" lengthAdjust="spacingAndGlyphs" >amount11</text>
<text x="1232.3" y="403.6" font-size="13.4" fill="#000" >amount2</text>
<text x="1232.3" y="423.6" font-size="13.4" fill="#000" textLength="61.1" lengthAdjust="spacingAndGlyphs" >amount22</text>
<rect x="469" y="388" width="101" height="21" fill="none" stroke="#217346" stroke-width="2"/>
<rect x="566" y="405" width="6" height="6" fill="#FFFFFF" />
<rect x="567" y="406" width="5" height="5" fill="#217346" />
<rect x="1417" y="249" width="21" height="291" fill="#E6E6E6" />
<rect x="1420.5" y="251.5" width="14" height="14" fill="#FFF" stroke="#ABABAB"/>
<path d="M1423.5 261 H1431.5 L1427.5 257 Z" stroke="none" fill="#333" stroke-width="1" />
<rect x="1420.5" y="266.5" width="14" height="233" fill="#FFF" stroke="#ABABAB"/>
<rect x="1421" y="500" width="13" height="26" fill="#F2F2F2" />
<rect x="1420.5" y="526.5" width="14" height="14" fill="#FFF" stroke="#ABABAB"/>
<path d="M1423.5 531 H1431.5 L1427.5 535 Z" stroke="none" fill="#333" stroke-width="1" />
<rect x="0" y="540" width="1438" height="29" fill="#E6E6E6" />
<rect x="0" y="540" width="1417" height="1" fill="#ABABAB" />
<rect x="1420" y="540" width="15" height="1" fill="#ABABAB" />
<rect x="100" y="540" width="66" height="23" fill="#FFFFFF" />
<rect x="100" y="540" width="1" height="23" fill="#ABABAB" />
<rect x="165" y="540" width="1" height="23" fill="#ABABAB" />
<rect x="101" y="540" width="64" height="1" fill="#FFFFFF" />
<rect x="100" y="563" width="66" height="2" fill="#217346" />
<text x="112.8" y="557.5" font-size="12.5" fill="#217346" textLength="41.2" lengthAdjust="spacingAndGlyphs" font-weight="bold" >Import</text>
<path d="M31.5 550 L27 553.3 L31.5 556.6 Z" stroke="none" fill="#BDBDBD" stroke-width="1" />
<path d="M56 550 L60.5 553.3 L56 556.6 Z" stroke="none" fill="#BDBDBD" stroke-width="1" />
<circle cx="207" cy="554" r="7.5" fill="none" stroke="#777" stroke-width="1.1"/>
<path d="M203 554 H211 M207 550 V558" stroke="#666" fill="none" stroke-width="1.4" />
<rect x="863" y="549" width="2" height="2" fill="#A8A8A8" />
<rect x="863" y="553" width="2" height="2" fill="#A8A8A8" />
<rect x="863" y="557" width="2" height="2" fill="#A8A8A8" />
<rect x="880.5" y="547.5" width="497" height="14" fill="#FFF" stroke="#ABABAB"/>
<rect x="894" y="548" width="1.5" height="13" fill="#A0A0A0" />
<rect x="1378" y="547" width="24" height="15" fill="#F2F2F2" />
<rect x="1402.5" y="547.5" width="14" height="14" fill="#FFF" stroke="#ABABAB"/>
<path d="M889.2 551 L885 554.5 L889.2 558 Z" stroke="none" fill="#222" stroke-width="1" />
<path d="M1407.8 551 L1412.3 554.5 L1407.8 558 Z" stroke="none" fill="#222" stroke-width="1" />
<rect x="0" y="568" width="1438" height="1" fill="#D4D4D4" />
<rect x="0" y="569" width="1438" height="21" fill="#F3F2F1" />
<text x="8.3" y="583.3" font-size="11" fill="#444" textLength="30.5" lengthAdjust="spacingAndGlyphs" >Ready</text>
<rect x="58.5" y="573.5" width="13" height="11" fill="none" stroke="#444"/>
<rect x="59" y="576" width="12" height="1" fill="#444" />
<rect x="60.5" y="578.5" width="4" height="1" fill="#444" />
<rect x="60.5" y="581" width="3" height="1" fill="#444" />
<circle cx="67" cy="581" r="3" fill="#FFF" stroke="#444"/><circle cx="67" cy="581" r="1.3" fill="#444"/>
<circle cx="96" cy="575" r="1.8" fill="none" stroke="#444"/>
<path d="M91 578 Q96 579 101 577 M96 579 V582 L93 585.5 M96 582 L99 585" stroke="#444" fill="none" stroke-width="1" />
<text x="99.5" y="585" font-size="8" fill="#444" textLength="4.5" lengthAdjust="spacingAndGlyphs" >?</text>
<text x="107.4" y="583.3" font-size="11" fill="#444" textLength="125.6" lengthAdjust="spacingAndGlyphs" >Accessibility: Unavailable</text>
<rect x="1127" y="569" width="40" height="21" fill="#D2D2D2" />
<path d="M1140.5 572.5 H1152.5 V584.5 H1140.5 Z M1144.5 572.5 V584.5 M1148.5 572.5 V584.5 M1140.5 576.5 H1152.5 M1140.5 580.5 H1152.5" stroke="#444" fill="none" stroke-width="1.2" />
<rect x="1180.5" y="572.5" width="13" height="12" fill="none" stroke="#444" stroke-width="1.1"/>
<rect x="1183.5" y="574.5" width="7" height="8" fill="none" stroke="#444" stroke-width="1.1"/>
<path d="M1185 576.7 H1189 M1185 578.7 H1189 M1185 580.7 H1189" stroke="#444" fill="none" stroke-width="0.9" />
<rect x="1220.5" y="572.5" width="13" height="12" fill="none" stroke="#444" stroke-width="1.1"/>
<path d="M1220.5 579.5 H1228.5 V572.5 M1224.5 572.5 V579.5" stroke="#444" fill="none" stroke-width="1.1" />
<rect x="1253" y="579" width="8" height="1" fill="#444" />
<rect x="1266" y="579" width="100" height="1" fill="#444" />
<rect x="1314" y="574" width="5" height="11" fill="#444" />
<path d="M1370.5 579.5 H1378.5 M1374.5 575.5 V583.5" stroke="#444" fill="none" stroke-width="1" />
<text x="1392.4" y="583.3" font-size="11" fill="#444" textLength="26.6" lengthAdjust="spacingAndGlyphs" >100%</text>
<rect x="1438" y="1" width="1" height="590" fill="#217346" />
<defs><linearGradient id="bsh" x1="0" y1="0" x2="0" y2="1"><stop offset="0" stop-color="#A8A8A8"/><stop offset="1" stop-color="#D6D6D6"/></linearGradient><linearGradient id="rsh" x1="0" y1="0" x2="1" y2="0"><stop offset="0" stop-color="#A8A8A8"/><stop offset="1" stop-color="#D6D6D6"/></linearGradient></defs>
<rect x="0" y="591" width="1442" height="4" fill="url(#bsh)" />
<rect x="1439" y="1" width="3" height="594" fill="url(#rsh)" />
<rect x="24" y="591" width="1" height="4" fill="#707070" />
<rect x="0" y="590" width="1439" height="1" fill="#217346" /></svg></body></html>
